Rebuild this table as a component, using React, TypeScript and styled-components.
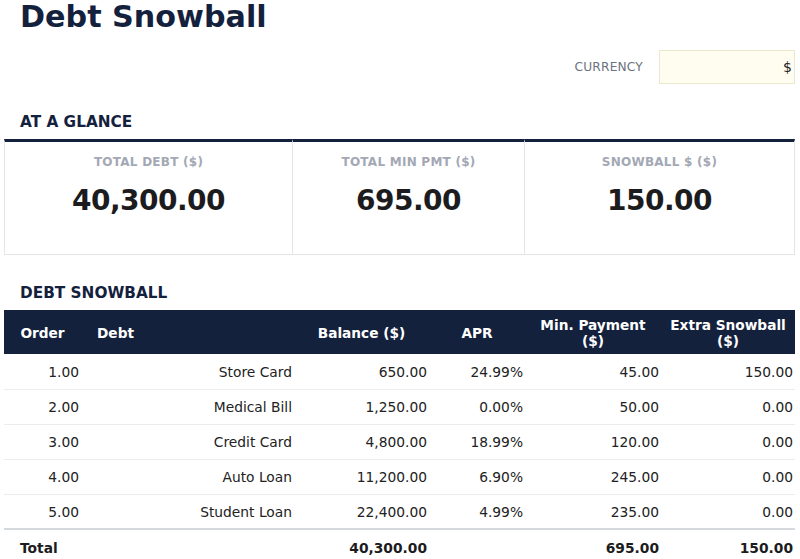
import React from "react";
import styled, { createGlobalStyle } from "styled-components";

const GlobalStyle = createGlobalStyle`
  html, body { margin: 0; padding: 0; background: #ffffff; }
  body { font-family: "DejaVu Sans", "Liberation Sans", sans-serif; color: #222; }
  * { box-sizing: border-box; }
`;

const NAVY = "#14213d";

const Page = styled.div`
  padding: 0 5px 0 4px;
`;

const Title = styled.h1`
  margin: 0;
  padding-left: 16px;
  font-size: 30.2px;
  line-height: 33px;
  font-weight: 700;
  color: ${NAVY};
`;

const CurrencyRow = styled.div`
  display: flex;
  justify-content: flex-end;
  align-items: center;
  gap: 16px;
  margin-top: 17px;
`;

const CurrencyLabel = styled.span`
  font-size: 12.2px;
  letter-spacing: 0.2px;
  color: #6b7280;
`;

const CurrencyInput = styled.div`
  width: 136px;
  height: 34px;
  display: flex;
  align-items: center;
  justify-content: flex-end;
  padding: 0 2px;
  background: #fffdf0;
  border: 1px solid #ece8cc;
  font-size: 14px;
  color: #222;
`;

const SectionHeading = styled.h2`
  margin: 30px 0 8px;
  padding-left: 16px;
  font-size: 15.3px;
  line-height: 17px;
  font-weight: 700;
  color: ${NAVY};
`;

const Cards = styled.div`
  display: grid;
  grid-template-columns: 289fr 232fr 270fr;
`;

const Card = styled.div<{ $first?: boolean }>`
  display: flex;
  flex-direction: column;
  align-items: center;
  height: 116px;
  padding-top: 13px;
  border-top: 3px solid ${NAVY};
  border-bottom: 1px solid #e3e5e9;
  border-right: 1px solid #e3e5e9;
  border-left: ${(p) => (p.$first ? "1px solid #e3e5e9" : "none")};
`;

const CardLabel = styled.div`
  font-size: 12px;
  line-height: 14px;
  font-weight: 700;
  letter-spacing: 0.25px;
  color: #a3a8b4;
`;

const CardValue = styled.div`
  margin-top: 15px;
  font-size: 28px;
  line-height: 33px;
  font-weight: 700;
  letter-spacing: -0.5px;
  color: #1c1c1e;
`;

const Table = styled.table`
  width: 100%;
  border-collapse: collapse;
  table-layout: fixed;
  font-size: 13.8px;
`;

const HeadCell = styled.th<{ $align?: "left" | "center" }>`
  height: 44px;
  padding: 7px ${(p) => (p.$align === "left" ? "6px 5px 16px" : "6px 5px")};
  background: ${NAVY};
  color: #ffffff;
  font-size: 13.7px;
  font-weight: 700;
  line-height: 16px;
  text-align: ${(p) => p.$align ?? "center"};
  vertical-align: middle;
`;

const Cell = styled.td<{ $align?: "left" | "right" }>`
  height: 35px;
  padding: ${(p) => (p.$align === "left" ? "1px 2px 0 16px" : "1px 2px 0")};
  text-align: ${(p) => p.$align ?? "right"};
  vertical-align: middle;
  border-bottom: 1px solid #eaecef;
  color: #222;
`;

const TotalCell = styled.td<{ $align?: "left" | "right" }>`
  height: 35px;
  padding: ${(p) => (p.$align === "left" ? "1px 2px 0 16px" : "1px 2px 0")};
  text-align: ${(p) => p.$align ?? "right"};
  vertical-align: middle;
  border-top: 2px solid #d5d8dd;
  font-weight: 700;
  color: #1c1c1e;
`;

const rows = [
  { order: "1.00", debt: "Store Card", balance: "650.00", apr: "24.99%", min: "45.00", extra: "150.00" },
  { order: "2.00", debt: "Medical Bill", balance: "1,250.00", apr: "0.00%", min: "50.00", extra: "0.00" },
  { order: "3.00", debt: "Credit Card", balance: "4,800.00", apr: "18.99%", min: "120.00", extra: "0.00" },
  { order: "4.00", debt: "Auto Loan", balance: "11,200.00", apr: "6.90%", min: "245.00", extra: "0.00" },
  { order: "5.00", debt: "Student Loan", balance: "22,400.00", apr: "4.99%", min: "235.00", extra: "0.00" },
];

const cards = [
  { label: "TOTAL DEBT ($)", value: "40,300.00" },
  { label: "TOTAL MIN PMT ($)", value: "695.00" },
  { label: "SNOWBALL $ ($)", value: "150.00" },
];

export default function App() {
  return (
    <Page>
      <GlobalStyle />
      <Title>Debt Snowball</Title>
      <CurrencyRow>
        <CurrencyLabel>CURRENCY</CurrencyLabel>
        <CurrencyInput>$</CurrencyInput>
      </CurrencyRow>

      <SectionHeading>AT A GLANCE</SectionHeading>
      <Cards>
        {cards.map((c, i) => (
          <Card key={c.label} $first={i === 0}>
            <CardLabel>{c.label}</CardLabel>
            <CardValue>{c.value}</CardValue>
          </Card>
        ))}
      </Cards>

      <SectionHeading>DEBT SNOWBALL</SectionHeading>
      <Table>
        <colgroup>
          <col style={{ width: 77 }} />
          <col style={{ width: 213 }} />
          <col style={{ width: 135 }} />
          <col style={{ width: 96 }} />
          <col style={{ width: 136 }} />
          <col />
        </colgroup>
        <thead>
          <tr>
            <HeadCell>Order</HeadCell>
            <HeadCell $align="left">Debt</HeadCell>
            <HeadCell>Balance ($)</HeadCell>
            <HeadCell>APR</HeadCell>
            <HeadCell>Min. Payment ($)</HeadCell>
            <HeadCell>Extra Snowball ($)</HeadCell>
          </tr>
        </thead>
        <tbody>
          {rows.map((r) => (
            <tr key={r.order}>
              <Cell>{r.order}</Cell>
              <Cell>{r.debt}</Cell>
              <Cell>{r.balance}</Cell>
              <Cell>{r.apr}</Cell>
              <Cell>{r.min}</Cell>
              <Cell>{r.extra}</Cell>
            </tr>
          ))}
          <tr>
            <TotalCell $align="left">Total</TotalCell>
            <TotalCell />
            <TotalCell>40,300.00</TotalCell>
            <TotalCell />
            <TotalCell>695.00</TotalCell>
            <TotalCell>150.00</TotalCell>
          </tr>
        </tbody>
      </Table>
    </Page>
  );
}
